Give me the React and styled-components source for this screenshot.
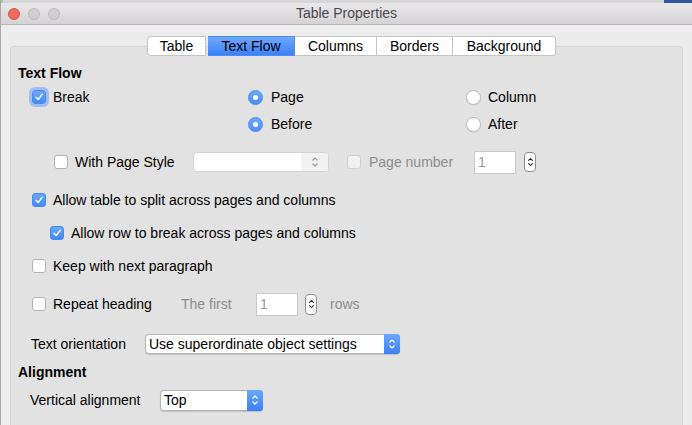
import React from 'react';
import styled, { createGlobalStyle, css } from 'styled-components';

const Global = createGlobalStyle`
  html, body { margin: 0; padding: 0; }
  body {
    font-family: "Liberation Sans", Arial, sans-serif;
    font-size: 14px;
    color: #000;
    background: #ececec;
  }
`;

const Window = styled.div`
  width: 692px;
  height: 425px;
  overflow: hidden;
  display: flex;
  flex-direction: column;
  background: #ececec;
  border-left: 1px solid #a9a9a9;
  box-sizing: border-box;
`;

const TopStrip = styled.div`
  height: 3px;
  display: flex;
  background: #d6d6d6;
`;

const StripSegment = styled.div`
  width: ${(p) => p.$w}px;
  background: ${(p) => p.$c};
  margin-left: ${(p) => (p.$auto ? 'auto' : '0')};
`;

const TitleBar = styled.div`
  height: 21px;
  border-bottom: 1px solid #b5b5b5;
  background: linear-gradient(#e9e7e9, #d5d3d5);
  display: grid;
  grid-template-columns: 1fr auto 1fr;
  align-items: center;
`;

const Lights = styled.div`
  display: flex;
  gap: 8px;
  padding-left: 7px;
`;

const Light = styled.span`
  width: 12px;
  height: 12px;
  border-radius: 50%;
  box-sizing: border-box;
  background: ${(p) => (p.$red ? '#ec6b5f' : '#d0ced0')};
  border: 1px solid ${(p) => (p.$red ? '#d65448' : '#bdbbbd')};
`;

const Title = styled.div`
  color: #4a4a4a;
  font-size: 14px;
  line-height: 17px;
`;

const Body = styled.div`
  flex: 1;
  display: flex;
  flex-direction: column;
  padding-top: 11px;
`;

const TabRow = styled.div`
  display: flex;
  padding-left: 146px;
  height: 20px;
  position: relative;
  z-index: 1;
`;

const Tab = styled.div`
  width: ${(p) => p.$w}px;
  height: 20px;
  box-sizing: border-box;
  display: flex;
  align-items: center;
  justify-content: center;
  border: 1px solid #c4c4c4;
  border-left-width: ${(p) => (p.$first ? 1 : 0)}px;
  margin-left: ${(p) => (p.$gap ? 2 : 0)}px;
  border-radius: ${(p) => (p.$first ? '4px 0 0 4px' : p.$last ? '0 3px 3px 0' : '0')};
  background: #fff;
  ${(p) =>
    p.$active &&
    css`
      background: linear-gradient(#6fa8fb, #3b80f6);
      border-color: #4c8cf3;
    `}
`;

const Panel = styled.div`
  flex: 1;
  margin: -10px 9px 0 9px;
  background: #e2e2e2;
  border: 1px solid #d4d4d4;
  border-bottom: none;
  border-radius: 4px 4px 0 0;
  padding: 18px 0 0 7px;
`;

const Heading = styled.div`
  font-weight: bold;
  line-height: 16px;
  height: 16px;
  margin-top: ${(p) => p.$mt || 0}px;
`;

const OptionGrid = styled.div`
  margin-top: 5px;
  padding-left: 14px;
  display: grid;
  grid-template-columns: 216px 218px 1fr;
  grid-auto-rows: 22px;
  row-gap: 5px;
`;

const Row = styled.div`
  display: flex;
  align-items: center;
  height: ${(p) => p.$h || 22}px;
  margin-top: ${(p) => p.$mt || 0}px;
  padding-left: ${(p) => p.$pl || 0}px;
`;

const Item = styled.label`
  display: flex;
  align-items: center;
  gap: ${(p) => p.$gap || 7}px;
  width: ${(p) => (p.$w ? `${p.$w}px` : 'auto')};
  margin-left: ${(p) => p.$ml || 0}px;
  flex-shrink: 0;
  line-height: 16px;
`;

const Text = styled.span`
  color: ${(p) => (p.$dim ? '#8c8c8c' : '#000')};
  width: ${(p) => (p.$w ? `${p.$w}px` : 'auto')};
  margin-left: ${(p) => p.$ml || 0}px;
  flex-shrink: 0;
  line-height: 16px;
  white-space: nowrap;
`;

const Box = styled.span`
  width: 14px;
  height: 14px;
  box-sizing: border-box;
  border-radius: 3px;
  display: flex;
  align-items: center;
  justify-content: center;
  flex-shrink: 0;
  background: #fff;
  border: 1px solid #b3b3b3;
  ${(p) =>
    p.$checked &&
    css`
      background: linear-gradient(#6ba7fb, #4289f7);
      border: 1px solid #4a88ee;
    `}
  ${(p) =>
    p.$disabled &&
    css`
      background: #f1f1f1;
      border: 1px solid #cfcfcf;
    `}
  ${(p) =>
    p.$focus &&
    css`
      box-shadow: 0 0 0 3px rgba(110, 160, 245, 0.55);
    `}
`;

const RadioDot = styled.span`
  width: 15px;
  height: 15px;
  box-sizing: border-box;
  border-radius: 50%;
  display: flex;
  align-items: center;
  justify-content: center;
  flex-shrink: 0;
  background: #fff;
  border: 1px solid #b9b9b9;
  box-shadow: 0 0.5px 1px rgba(0, 0, 0, 0.08);
  ${(p) =>
    p.$checked &&
    css`
      background: linear-gradient(#6ea9fb, #4a8cf7);
      border: 1px solid #4e8bf0;
      &::after {
        content: '';
        width: 5px;
        height: 5px;
        border-radius: 50%;
        background: #fff;
      }
    `}
`;

const Select = styled.div`
  width: ${(p) => p.$w}px;
  height: ${(p) => p.$h || 20}px;
  box-sizing: border-box;
  display: flex;
  flex-shrink: 0;
  background: #fff;
  border: 1px solid ${(p) => (p.$disabled ? '#d3d3d3' : '#b6b6b6')};
  border-radius: 4px;
  box-shadow: ${(p) => (p.$disabled ? 'none' : '0 0.5px 1px rgba(0,0,0,0.15)')};
`;

const SelectValue = styled.span`
  flex: 1;
  padding-left: 3px;
  display: flex;
  align-items: center;
  white-space: nowrap;
  overflow: hidden;
`;

const SelectArrows = styled.span`
  width: ${(p) => (p.$disabled ? 27 : 16)}px;
  display: flex;
  align-items: center;
  justify-content: center;
  border-radius: 0 3px 3px 0;
  background: ${(p) => (p.$disabled ? '#f2f2f2' : 'linear-gradient(#6ea8fb, #3b80f6)')};
  margin: ${(p) => (p.$disabled ? '0' : '-1px -1px -1px 0')};
`;

const Spinner = styled.span`
  width: 12px;
  height: ${(p) => p.$h || 20}px;
  box-sizing: border-box;
  border: 1px solid #8d8d8d;
  border-radius: 4px;
  background: #fff;
  display: flex;
  align-items: center;
  justify-content: center;
  flex-shrink: 0;
  margin-left: ${(p) => p.$ml || 0}px;
`;

const NumberField = styled.span`
  width: 42px;
  height: 23px;
  box-sizing: border-box;
  border: 1px solid #c9c9c9;
  background: #fff;
  color: #9a9a9a;
  display: flex;
  align-items: center;
  padding-left: 3px;
  flex-shrink: 0;
`;

const Check = () => (
  <svg width="10" height="10" viewBox="0 0 10 10">
    <path d="M2 5.3 L4.2 7.6 L8.2 2.2" fill="none" stroke="#fff" strokeWidth="1.4" strokeLinecap="round" strokeLinejoin="round" />
  </svg>
);

const Chevrons = ({ color = '#fff', w = 8, h = 14 }) => (
  <svg width={w} height={h} viewBox="0 0 8 14">
    <path d="M1.8 5.2 L4 3 L6.2 5.2 M1.8 8.8 L4 11 L6.2 8.8" fill="none" stroke={color} strokeWidth="1.2" strokeLinecap="round" strokeLinejoin="round" />
  </svg>
);

const CheckBox = ({ checked, disabled, focus }) => (
  <Box $checked={checked} $disabled={disabled} $focus={focus}>
    {checked && <Check />}
  </Box>
);

export default function App() {
  return (
    <>
      <Global />
      <Window>
        <TopStrip>
          <StripSegment $w={2} $c="#bdbdbd" />
          <StripSegment $w={28} $c="#2f559e" $auto />
        </TopStrip>
        <TitleBar>
          <Lights>
            <Light $red />
            <Light />
            <Light />
          </Lights>
          <Title>Table Properties</Title>
          <div />
        </TitleBar>
        <Body>
          <TabRow>
            <Tab $w={59} $first>Table</Tab>
            <Tab $w={87} $active $gap>Text Flow</Tab>
            <Tab $w={82}>Columns</Tab>
            <Tab $w={76}>Borders</Tab>
            <Tab $w={103} $last>Background</Tab>
          </TabRow>
          <Panel>
            <Heading>Text Flow</Heading>
            <OptionGrid>
              <Item>
                <CheckBox checked focus />
                <Text>Break</Text>
              </Item>
              <Item $gap={8}>
                <RadioDot $checked />
                <Text>Page</Text>
              </Item>
              <Item $gap={7}>
                <RadioDot />
                <Text>Column</Text>
              </Item>
              <div />
              <Item $gap={8}>
                <RadioDot $checked />
                <Text>Before</Text>
              </Item>
              <Item $gap={7}>
                <RadioDot />
                <Text>After</Text>
              </Item>
            </OptionGrid>

            <Row $mt={15} $h={24} $pl={36}>
              <Item>
                <CheckBox />
                <Text $w={118}>With Page Style</Text>
              </Item>
              <Select $w={136} $disabled>
                <SelectValue />
                <SelectArrows $disabled>
                  <Chevrons color="#9a9a9a" />
                </SelectArrows>
              </Select>
              <Item $ml={18} $gap={8}>
                <Box $disabled />
                <Text $dim $w={105}>Page number</Text>
              </Item>
              <NumberField>1</NumberField>
              <Spinner $ml={8}>
                <Chevrons color="#222" w={7} h={14} />
              </Spinner>
            </Row>

            <Row $mt={15} $pl={14}>
              <Item>
                <CheckBox checked />
                <Text>Allow table to split across pages and columns</Text>
              </Item>
            </Row>
            <Row $mt={11} $pl={32}>
              <Item>
                <CheckBox checked />
                <Text>Allow row to break across pages and columns</Text>
              </Item>
            </Row>
            <Row $mt={11} $pl={14}>
              <Item>
                <CheckBox />
                <Text>Keep with next paragraph</Text>
              </Item>
            </Row>
            <Row $mt={15} $h={24} $pl={14}>
              <Item>
                <CheckBox />
                <Text $w={128}>Repeat heading</Text>
              </Item>
              <Text $dim $w={75}>The first</Text>
              <NumberField>1</NumberField>
              <Spinner $ml={7} $h={21}>
                <Chevrons color="#222" w={7} h={14} />
              </Spinner>
              <Text $dim $ml={13}>rows</Text>
            </Row>

            <Row $mt={17} $pl={13}>
              <Text $w={114}>Text orientation</Text>
              <Select $w={255}>
                <SelectValue>Use superordinate object settings</SelectValue>
                <SelectArrows>
                  <Chevrons />
                </SelectArrows>
              </Select>
            </Row>

            <Heading $mt={9}>Alignment</Heading>
            <Row $mt={9} $pl={12}>
              <Text $w={130}>Vertical alignment</Text>
              <Select $w={103} $h={21}>
                <SelectValue>Top</SelectValue>
                <SelectArrows>
                  <Chevrons />
                </SelectArrows>
              </Select>
            </Row>
          </Panel>
        </Body>
      </Window>
    </>
  );
}
